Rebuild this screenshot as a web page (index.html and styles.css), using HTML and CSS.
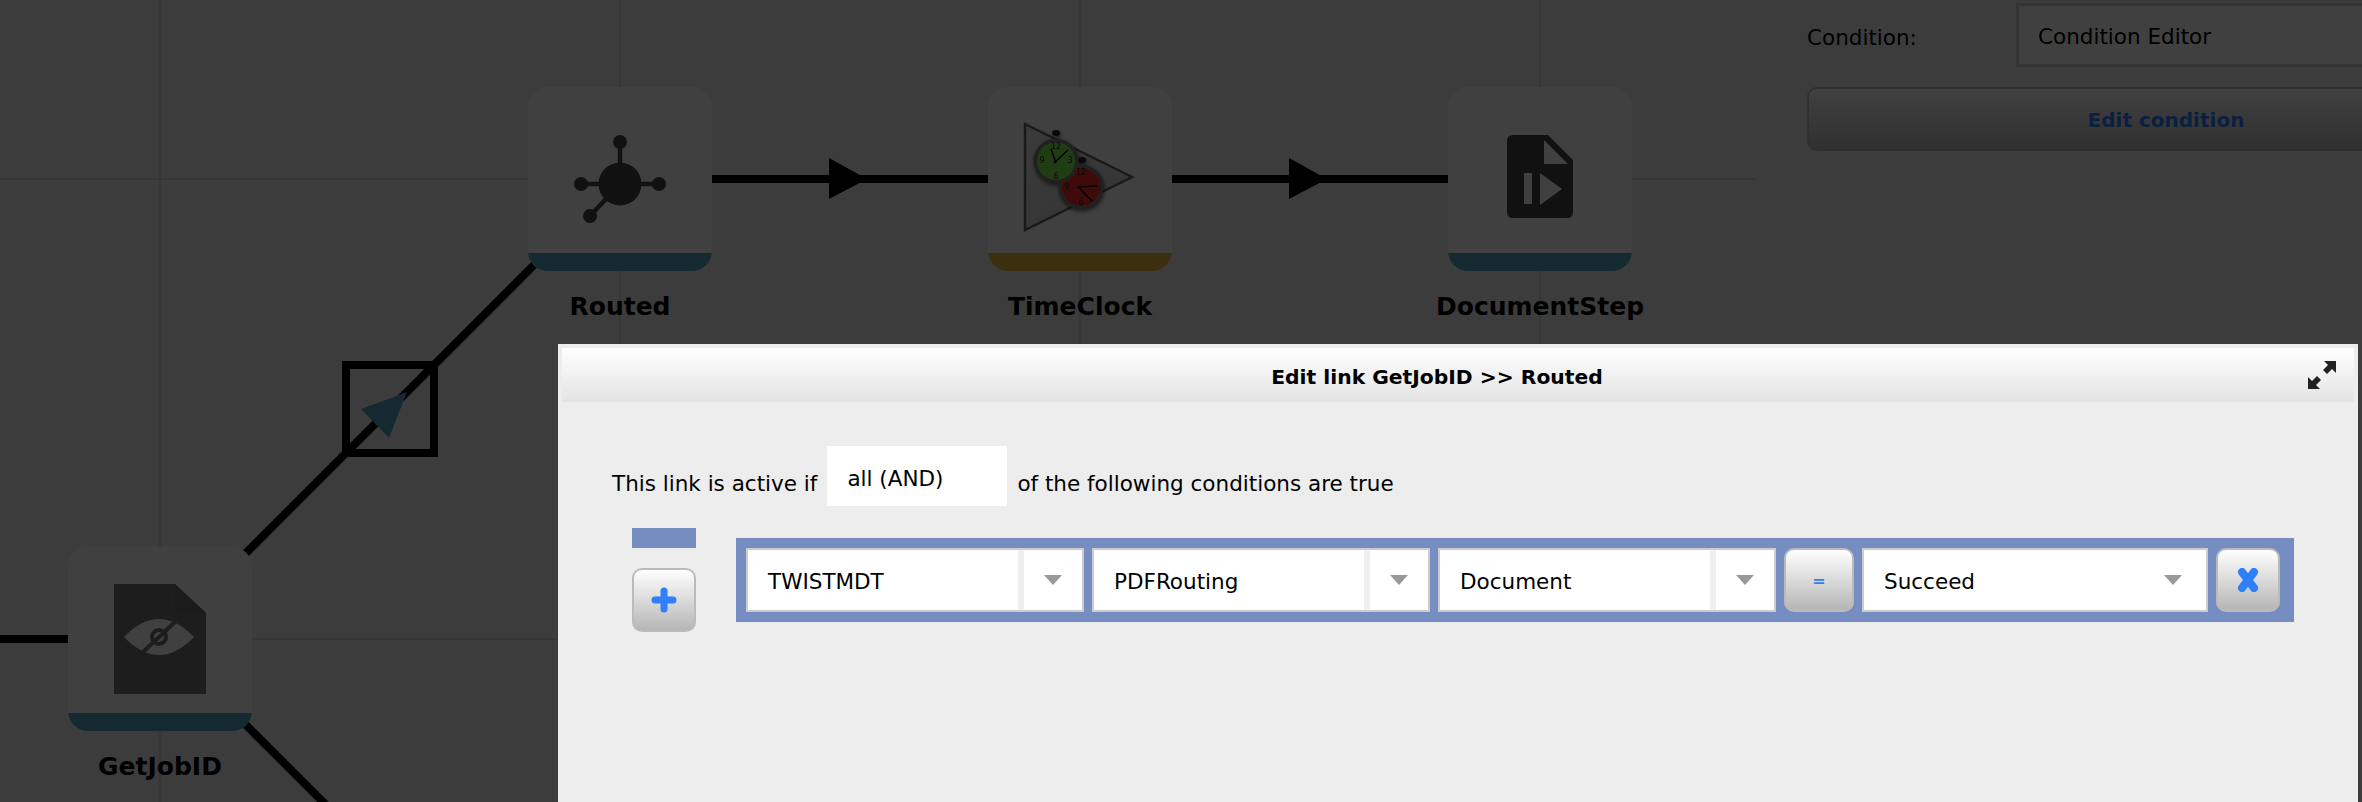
FILE: index.html
```html
<!DOCTYPE html>
<html lang="en">
<head>
    <meta charset="UTF-8">
    <meta name="viewport" content="width=device-width, initial-scale=1.0">
    <title>Edit link</title>
    <link rel="stylesheet" href="styles.css">
</head>
<body>
    <div class="app">
        <!-- Flow canvas -->
        <div class="canvas">
            <svg class="wires" width="1755" height="802" viewBox="0 0 1755 802">
                <g class="grid">
                    <line x1="160" y1="0" x2="160" y2="802"/>
                    <line x1="620" y1="0" x2="620" y2="802"/>
                    <line x1="1080" y1="0" x2="1080" y2="802"/>
                    <line x1="1540" y1="0" x2="1540" y2="802"/>
                    <line x1="0" y1="179" x2="1755" y2="179"/>
                    <line x1="0" y1="639" x2="1755" y2="639"/>
                </g>
                <g class="links">
                    <line x1="0" y1="639" x2="160" y2="639"/>
                    <line x1="160" y1="639" x2="620" y2="179"/>
                    <line x1="160" y1="639" x2="330" y2="809"/>
                    <line x1="620" y1="179" x2="1540" y2="179"/>
                    <rect x="346" y="365" width="88" height="88" class="link-box"/>
                </g>
                <polygon class="arrow" points="829,158 867,179 829,199"/>
                <polygon class="arrow" points="1289,158 1327,179 1289,199"/>
                <polygon class="arrow-selected" points="361,409 407,392 389,438"/>
            </svg>

            <div class="node node-routed">
                <div class="node-card">
                    <svg class="node-icon" viewBox="0 0 184 166">
                        <g class="icon-dark">
                            <path class="icon-spoke" d="M92 55V97M53 97H131M62 129L92 97"/>
                            <circle cx="92" cy="97" r="21.5"/>
                            <circle cx="92" cy="55" r="7"/>
                            <circle cx="53" cy="97" r="7"/>
                            <circle cx="131" cy="97" r="7"/>
                            <circle cx="62" cy="129" r="7"/>
                        </g>
                    </svg>
                    <div class="node-bar"></div>
                </div>
                <div class="node-label">Routed</div>
            </div>

            <div class="node node-clock">
                <div class="node-card">
                    <svg class="node-icon" viewBox="0 0 184 166">
                        <defs>
                            <linearGradient id="tri" x1="0" y1="0" x2="1" y2="1">
                                <stop offset="0" stop-color="#e8e8e8"/>
                                <stop offset="1" stop-color="#d0d0d0"/>
                            </linearGradient>
                        </defs>
                        <polygon class="clock-tri" points="37,37 144,90 37,143"/>
                        <g class="clock-group">
                            <ellipse class="clock-ear" cx="94" cy="73" rx="4" ry="3"/>
                            <circle class="clock-rim" cx="93" cy="100" r="22.5"/>
                            <circle class="clock-red" cx="93" cy="100" r="19"/>
                            <text class="clock-num" x="93" y="88">12</text>
                            <text class="clock-num" x="93" y="118">6</text>
                            <text class="clock-num" x="79" y="102">9</text>
                            <path class="clock-hand" d="M90 100L109 99M90 100L104 114"/>
                            <ellipse class="clock-ear" cx="68" cy="46" rx="4" ry="3"/>
                            <circle class="clock-rim" cx="68" cy="74" r="22.5"/>
                            <circle class="clock-green" cx="68" cy="74" r="19"/>
                            <text class="clock-num" x="68" y="62">12</text>
                            <text class="clock-num" x="68" y="92">6</text>
                            <text class="clock-num" x="54" y="76">9</text>
                            <text class="clock-num" x="82" y="76">3</text>
                            <path class="clock-hand" d="M63 62L68 76M66 76L80 63"/>
                        </g>
                    </svg>
                    <div class="node-bar bar-yellow"></div>
                </div>
                <div class="node-label">TimeClock</div>
            </div>

            <div class="node node-doc">
                <div class="node-card">
                    <svg class="node-icon" viewBox="0 0 184 166">
                        <path class="icon-dark" d="M65 48H100L125 73V125Q125 131 119 131H65Q59 131 59 125V54Q59 48 65 48Z"/>
                        <path class="icon-cut" d="M96 53L120 77H96ZM76 86H84V117H76ZM92 86L114 102L92 118Z"/>
                    </svg>
                    <div class="node-bar"></div>
                </div>
                <div class="node-label">DocumentStep</div>
            </div>

            <div class="node node-job">
                <div class="node-card">
                    <svg class="node-icon" viewBox="0 0 184 166">
                        <path class="icon-grey" d="M46 37H107L138 66V147H46Z"/>
                        <path class="icon-fold" d="M107 37L138 66H107Z"/>
                        <path class="icon-cut" d="M56 90Q91 54 126 90Q91 126 56 90Z"/>
                        <circle class="icon-eye" cx="91" cy="90" r="7"/>
                        <line class="icon-eye" x1="75" y1="105" x2="107" y2="75"/>
                    </svg>
                    <div class="node-bar"></div>
                </div>
                <div class="node-label">GetJobID</div>
            </div>
        </div>

        <!-- Properties panel -->
        <div class="side">
            <div class="side-row">
                <div class="side-label">Condition:</div>
                <div class="side-input">Condition Editor</div>
            </div>
            <div class="side-button">Edit condition</div>
        </div>
    </div>

    <div class="backdrop"></div>

    <!-- Link dialog -->
    <div class="dialog">
        <div class="dialog-title">
            <div class="dialog-name">Edit link GetJobID &gt;&gt; Routed</div>
            <svg class="dialog-expand" width="28" height="28" viewBox="0 0 28 28">
                <path d="M28 0V12L24 8L19 13L15 9L20 4L16 0ZM0 28V16L4 20L9 15L13 19L8 24L12 28Z"/>
            </svg>
        </div>
        <div class="dialog-body">
            <div class="mode-row">
                <span class="mode-text">This link is active if</span>
                <div class="mode-select">all (AND)</div>
                <span class="mode-text">of the following conditions are true</span>
            </div>
            <div class="rules">
                <div class="rules-side">
                    <div class="rules-swatch"></div>
                    <div class="btn btn-add">
                        <svg width="26" height="26" viewBox="0 0 26 26"><path class="btn-stroke" d="M13 4V22M4 13H22"/></svg>
                    </div>
                </div>
                <div class="rule">
                    <div class="sel">
                        <div class="sel-value">TWISTMDT</div>
                        <div class="sel-arrow"><i></i></div>
                    </div>
                    <div class="sel">
                        <div class="sel-value">PDFRouting</div>
                        <div class="sel-arrow"><i></i></div>
                    </div>
                    <div class="sel">
                        <div class="sel-value">Document</div>
                        <div class="sel-arrow"><i></i></div>
                    </div>
                    <div class="btn btn-op">=</div>
                    <div class="sel sel-plain">
                        <div class="sel-value">Succeed</div>
                        <div class="sel-arrow"><i></i></div>
                    </div>
                    <div class="btn btn-del">
                        <svg width="24" height="24" viewBox="0 0 24 24"><path class="btn-stroke btn-stroke-heavy" d="M6 4L18 20M18 4L6 20"/></svg>
                    </div>
                </div>
            </div>
        </div>
    </div>
</body>
</html>
```

FILE: styles.css
```css
body {
    margin: 0;
    width: 2362px;
    height: 802px;
    overflow: hidden;
    position: relative;
    font-family: "DejaVu Sans", sans-serif;
    font-size: 21.5px;
    color: #000;
    background-color: #f0f0f0;
}
.app {
    display: flex;
    height: 802px;
}
.canvas {
    position: relative;
    width: 1755px;
    flex: none;
}
.wires {
    position: absolute;
    left: 0;
    top: 0;
}
.grid line {
    stroke: #d8d8d8;
    stroke-width: 2;
}
.links line {
    stroke: #000;
    stroke-width: 8;
}
.link-box {
    fill: none;
    stroke: #000;
    stroke-width: 8;
}
.arrow {
    fill: #000;
}
.arrow-selected {
    fill: #54a8c0;
}

/* Nodes */
.node {
    position: absolute;
    width: 184px;
    display: flex;
    flex-direction: column;
    align-items: center;
}
.node-routed { left: 528px; top: 87px; }
.node-clock { left: 988px; top: 87px; }
.node-doc { left: 1448px; top: 87px; }
.node-job { left: 68px; top: 547px; }
.node-card {
    width: 184px;
    height: 184px;
    background-color: #fff;
    border-radius: 20px;
    overflow: hidden;
    display: flex;
    flex-direction: column;
}
.node-icon {
    width: 184px;
    height: 166px;
    display: block;
}
.node-bar {
    height: 18px;
    background-color: #54a8c0;
}
.bar-yellow {
    background-color: #ecbc40;
}
.node-label {
    margin-top: 21px;
    font-size: 25px;
    line-height: 30px;
    font-weight: bold;
    white-space: nowrap;
}
.icon-dark { fill: #444; }
.icon-spoke {
    fill: none;
    stroke: #444;
    stroke-width: 4.5;
}
.icon-cut { fill: #fff; }
.icon-grey { fill: #747474; }
.icon-fold { fill: #6c6c6c; }
.icon-eye {
    fill: none;
    stroke: #747474;
    stroke-width: 4;
}
.clock-tri {
    fill: url(#tri);
    stroke: #666;
    stroke-width: 2.5;
    filter: blur(0.6px);
}
.clock-group {
    filter: drop-shadow(1px 2px 2px rgba(0, 0, 0, 0.6));
}
.clock-ear { fill: #222; }
.clock-rim { fill: #808080; }
.clock-green { fill: #7cf048; }
.clock-red { fill: #ff2a2a; }
.clock-num {
    font-size: 8px;
    text-anchor: middle;
    fill: #222;
}
.clock-hand {
    fill: none;
    stroke: #000;
    stroke-width: 1.6;
}

/* Side panel */
.side {
    flex: 1;
    min-width: 0;
    overflow: hidden;
    padding: 3px 0 0 52px;
}
.side-row {
    display: flex;
    align-items: center;
}
.side-label {
    width: 209px;
    flex: none;
    padding-top: 4px;
}
.side-input {
    width: 520px;
    flex: none;
    height: 55px;
    line-height: 55px;
    padding: 3px 0 0 19px;
    border: 3px solid #ccc;
    background-color: #fff;
    white-space: nowrap;
}
.side-button {
    width: 714px;
    height: 60px;
    margin-top: 20px;
    border: 2px solid #bbb;
    border-radius: 10px;
    background: linear-gradient(#fff, #c0c0c0);
    color: #2f7ffb;
    font-size: 20px;
    font-weight: bold;
    line-height: 62px;
    text-align: center;
}

.backdrop {
    position: absolute;
    left: 0;
    top: 0;
    width: 100%;
    height: 100%;
    background-color: rgba(0, 0, 0, 0.75);
}

/* Dialog */
.dialog {
    position: absolute;
    left: 558px;
    top: 344px;
    right: 4px;
    bottom: 0;
    border: 4px solid #ededed;
    border-bottom: none;
    background-color: #ededed;
}
.dialog-title {
    height: 54px;
    display: flex;
    align-items: center;
    padding: 0 18px 0 4px;
    background: linear-gradient(#fff, #e4e4e4);
}
.dialog-name {
    flex: 1;
    padding-top: 4px;
    text-align: center;
    font-size: 20.3px;
    font-weight: bold;
    white-space: nowrap;
}
.dialog-expand {
    fill: #222;
    flex: none;
}
.dialog-body {
    padding: 44px 0 0 50px;
}
.mode-row {
    display: flex;
    align-items: center;
    gap: 10px;
}
.mode-text {
    padding-top: 14px;
}
.mode-select {
    width: 160px;
    height: 55px;
    line-height: 55px;
    padding: 5px 0 0 20px;
    background-color: #fff;
}
.rules {
    display: flex;
    gap: 40px;
    margin: 22px 0 0 20px;
}
.rules-side {
    width: 64px;
    display: flex;
    flex-direction: column;
    gap: 20px;
}
.rules-swatch {
    height: 20px;
    background-color: #758dc0;
}
.rule {
    width: 1548px;
    height: 64px;
    margin-top: 10px;
    padding: 10px 0 10px 10px;
    display: flex;
    gap: 8px;
    background-color: #758dc0;
}
.sel {
    width: 338px;
    height: 64px;
    box-sizing: border-box;
    flex: none;
    display: flex;
    border: 2px solid #ccc;
    background-color: #fff;
}
.sel-value {
    flex: 1;
    padding: 4px 0 0 20px;
    line-height: 56px;
    white-space: nowrap;
}
.sel-arrow {
    width: 58px;
    flex: none;
    border-left: 6px solid #efefef;
    display: flex;
    align-items: center;
    justify-content: center;
}
.sel-arrow i {
    width: 0;
    height: 0;
    border-left: 9px solid transparent;
    border-right: 9px solid transparent;
    border-top: 10px solid #999;
}
.sel-plain {
    width: 346px;
}
.sel-plain .sel-arrow {
    width: 66px;
    border-left: none;
}
.btn {
    box-sizing: border-box;
    height: 64px;
    flex: none;
    display: flex;
    align-items: center;
    justify-content: center;
    border: 2px solid #bbb;
    border-radius: 10px;
    background: linear-gradient(#fff, #b6b6b6);
    color: #2f7ffb;
}
.btn-add {
    width: 64px;
}
.btn-op {
    width: 70px;
    font-size: 16px;
    font-weight: bold;
}
.btn-del {
    width: 64px;
}
.btn-stroke {
    fill: none;
    stroke: #2f7ffb;
    stroke-width: 7;
    stroke-linecap: round;
}
.btn-stroke-heavy {
    stroke-width: 8;
}
```
